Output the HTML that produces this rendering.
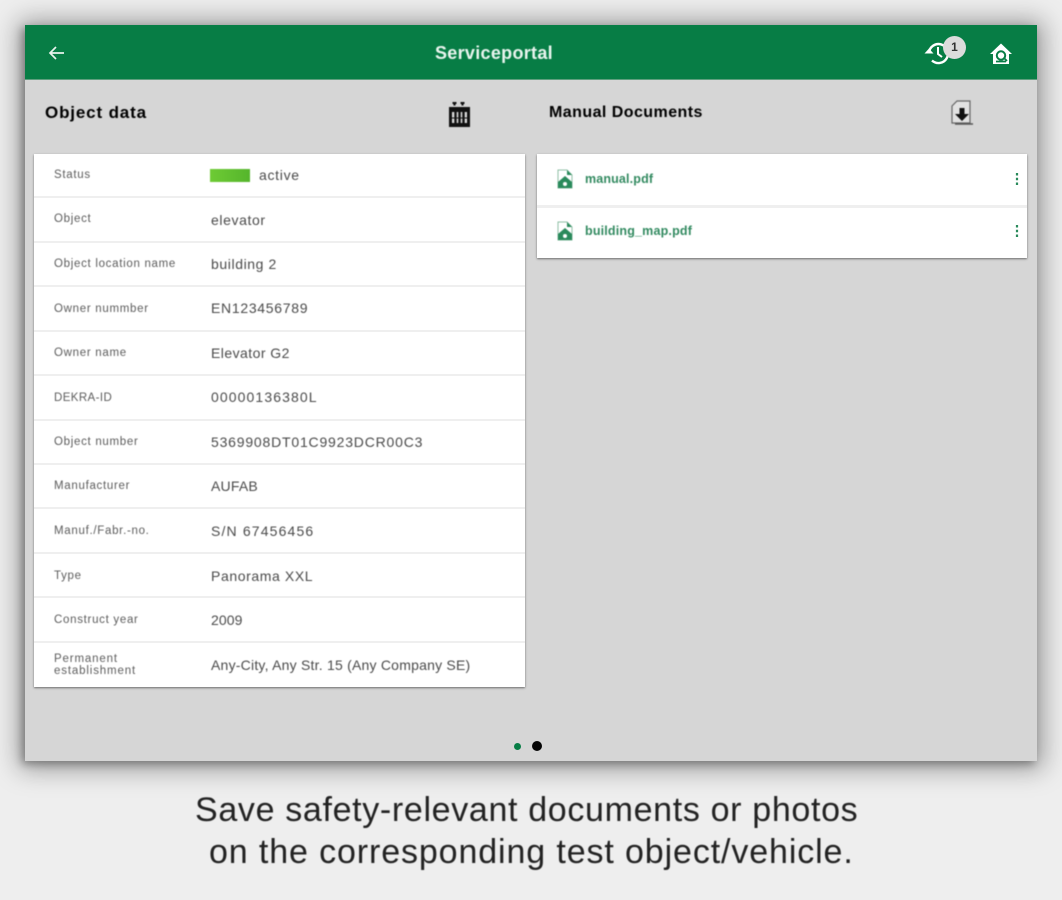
<!DOCTYPE html>
<html><head><meta charset="utf-8"><style>
html,body{margin:0;padding:0;width:1062px;height:900px;overflow:hidden;background:#eeeeee;font-family:"Liberation Sans",sans-serif}
.a{position:absolute;white-space:nowrap}
#panel{position:absolute;left:25px;top:25px;width:1012px;height:736px;background:#d6d6d6;box-shadow:0 2px 24px 6px rgba(0,0,0,.36),-3px 3px 8px rgba(0,0,0,.3)}
#bar{position:absolute;left:25px;top:25px;width:1012px;height:55px;background:#077d45;border-bottom:1px solid #5f9f7e;box-sizing:border-box}
.card{position:absolute;background:#fff;box-shadow:0 1px 2px rgba(0,0,0,.5)}
.line{position:absolute;height:2px;background:#efefef}
.l{font-size:11.5px;color:#5c5c5c;left:54px;letter-spacing:.7px}
.v{font-size:14px;color:#4a4a4a;left:211px;letter-spacing:.6px}
.h{font-size:17px;font-weight:bold;color:#000}
.f{font-size:12.5px;font-weight:bold;color:#328a60;left:585px;letter-spacing:.2px}
.cap{font-size:34px;color:#222}
.blur{filter:blur(.4px)}
</style></head><body>
<div id="panel"></div><div id="bar"></div>

<svg class="a" style="left:47px;top:43px" width="20" height="20" viewBox="0 0 20 20"><path d="M17 10H3.500M9 4l-6 6 6 6" fill="none" stroke="#e8f3ed" stroke-width="1.700"/></svg>
<div class="a blur" style="left:435px;top:43px;font-size:18px;font-weight:bold;color:#eaf5ef;letter-spacing:.3px">Serviceportal</div>

<svg class="a" style="left:922px;top:38px" width="30" height="30" viewBox="0 0 30 30"><path d="M7 15a9.500 9.500 0 1 1 3 7.500" fill="none" stroke="#fff" stroke-width="2.400"/><path d="M2.500 15.500L7 10.500l4.500 5z" fill="#fff"/><path d="M16 9v7l4 3" fill="none" stroke="#fff" stroke-width="2"/></svg>
<div class="a" style="left:943px;top:36px;width:23px;height:23px;border-radius:50%;background:#dcdcdc"></div>
<div class="a" style="left:943px;top:40px;width:23px;text-align:center;font-size:12px;font-weight:bold;color:#333">1</div>
<svg class="a" style="left:989px;top:42px" width="24" height="24" viewBox="0 0 24 24"><path d="M12 1.500L1 12h3v10h16V12h3z" fill="#fff"/><circle cx="12" cy="13.500" r="4.200" fill="none" stroke="#077d45" stroke-width="2"/><path d="M7 19.500h10M15 16l3 3" stroke="#077d45" stroke-width="1.800"/></svg>

<div class="a h blur" style="left:45px;top:103px;letter-spacing:.85px">Object data</div>
<svg class="a blur" style="left:447px;top:99px" width="25" height="30" viewBox="0 0 25 30"><path d="M7.500 3v3.500M15.500 3v3.500M5.500 4h4M13.500 4h4" stroke="#111" stroke-width="2"/><rect x="2" y="8" width="21" height="20" fill="#111"/><rect x="5" y="13" width="15" height="11" fill="#ddd"/><path d="M8.500 13v11M12.500 13v11M16.500 13v11" stroke="#111" stroke-width="2.400"/><path d="M5 19h15" stroke="#111" stroke-width="1"/></svg>
<div class="a blur" style="left:549px;top:104px;font-size:16px;font-weight:bold;color:#000;letter-spacing:.45px">Manual Documents</div>
<svg class="a blur" style="left:949px;top:98px" width="26" height="30" viewBox="0 0 26 30"><path d="M8 3h13v22H3V8z" fill="#e2e2e2" stroke="#666" stroke-width="1.200"/><path d="M10.500 10h5v6H20l-7 7-7-7h4.500z" fill="#111"/><path d="M6 26h18" stroke="#555" stroke-width="1.500"/></svg>

<div class="card" style="left:34px;top:154px;width:491px;height:533px"></div>
<div class="line" style="left:34px;top:196px;width:491px"></div>
<div class="line" style="left:34px;top:241px;width:491px"></div>
<div class="line" style="left:34px;top:285px;width:491px"></div>
<div class="line" style="left:34px;top:330px;width:491px"></div>
<div class="line" style="left:34px;top:374px;width:491px"></div>
<div class="line" style="left:34px;top:419px;width:491px"></div>
<div class="line" style="left:34px;top:463px;width:491px"></div>
<div class="line" style="left:34px;top:507px;width:491px"></div>
<div class="line" style="left:34px;top:552px;width:491px"></div>
<div class="line" style="left:34px;top:596px;width:491px"></div>
<div class="line" style="left:34px;top:641px;width:491px"></div>

<div class="a blur" style="left:210px;top:169px;width:40px;height:13px;background:linear-gradient(90deg,#6ecb34,#55b52c)"></div>
<div class="a l blur" style="top:169px">Status</div><div class="a v blur" style="left:259px;top:167px;letter-spacing:.7px">active</div>
<div class="a l blur" style="top:213px">Object</div><div class="a v blur" style="top:212px">elevator</div>
<div class="a l blur" style="top:258px">Object location name</div><div class="a v blur" style="top:256px">building 2</div>
<div class="a l blur" style="top:303px">Owner nummber</div><div class="a v blur" style="top:300px;letter-spacing:.7px">EN123456789</div>
<div class="a l blur" style="top:347px">Owner name</div><div class="a v blur" style="top:345px;letter-spacing:.45px">Elevator G2</div>
<div class="a l blur" style="top:392px;letter-spacing:.4px">DEKRA-ID</div><div class="a v blur" style="top:389px;letter-spacing:1.1px">00000136380L</div>
<div class="a l blur" style="top:436px">Object number</div><div class="a v blur" style="top:434px;letter-spacing:.8px">5369908DT01C9923DCR00C3</div>
<div class="a l blur" style="top:480px">Manufacturer</div><div class="a v blur" style="top:478px;letter-spacing:.2px">AUFAB</div>
<div class="a l blur" style="top:525px">Manuf./Fabr.-no.</div><div class="a v blur" style="top:523px;letter-spacing:1.15px">S/N 67456456</div>
<div class="a l blur" style="top:570px">Type</div><div class="a v blur" style="top:568px">Panorama XXL</div>
<div class="a l blur" style="top:614px">Construct year</div><div class="a v blur" style="top:612px;letter-spacing:.1px">2009</div>
<div class="a l blur" style="top:653px;line-height:12px;letter-spacing:.85px">Permanent<br>establishment</div><div class="a v blur" style="top:657px;letter-spacing:.22px">Any-City, Any Str. 15 (Any Company SE)</div>

<div class="card" style="left:537px;top:154px;width:490px;height:104px"></div>
<div class="line" style="left:537px;top:205px;width:490px;height:3px"></div>
<svg class="a blur" style="left:555px;top:168px" width="20" height="22" viewBox="0 0 20 22"><path d="M3 2h9l5 5v13H3z" fill="#fff" stroke="#8fbfa6" stroke-width="1"/><path d="M12 2l5 5h-5z" fill="#2a8a5c"/><path d="M3 20v-6l7-6 7 6v6z" fill="#2a8a5c"/><circle cx="10" cy="16" r="2" fill="#fff"/></svg>
<svg class="a blur" style="left:555px;top:220px" width="20" height="22" viewBox="0 0 20 22"><path d="M3 2h9l5 5v13H3z" fill="#fff" stroke="#8fbfa6" stroke-width="1"/><path d="M12 2l5 5h-5z" fill="#2a8a5c"/><path d="M3 20v-6l7-6 7 6v6z" fill="#2a8a5c"/><circle cx="10" cy="16" r="2" fill="#fff"/></svg>
<div class="a f blur" style="top:172px;letter-spacing:.15px">manual.pdf</div>
<div class="a f blur" style="top:224px;letter-spacing:.18px">building_map.pdf</div>
<svg class="a" style="left:1014px;top:171px" width="6" height="16" viewBox="0 0 6 16"><path d="M3 2v2.500M3 6.800v2.500M3 11.500v2.500" stroke="#2a8a5c" stroke-width="2.200"/></svg>
<svg class="a" style="left:1014px;top:223px" width="6" height="16" viewBox="0 0 6 16"><path d="M3 2v2.500M3 6.800v2.500M3 11.500v2.500" stroke="#2a8a5c" stroke-width="2.200"/></svg>

<div class="a" style="left:514px;top:743px;width:7px;height:7px;border-radius:50%;background:#077d45"></div>
<div class="a" style="left:532px;top:741px;width:10px;height:10px;border-radius:50%;background:#050505"></div>

<div class="a cap blur" style="left:195px;top:791px;letter-spacing:.66px">Save safety-relevant documents or photos</div>
<div class="a cap blur" style="left:209px;top:833px;letter-spacing:.88px">on the corresponding test object/vehicle.</div>
</body></html>
